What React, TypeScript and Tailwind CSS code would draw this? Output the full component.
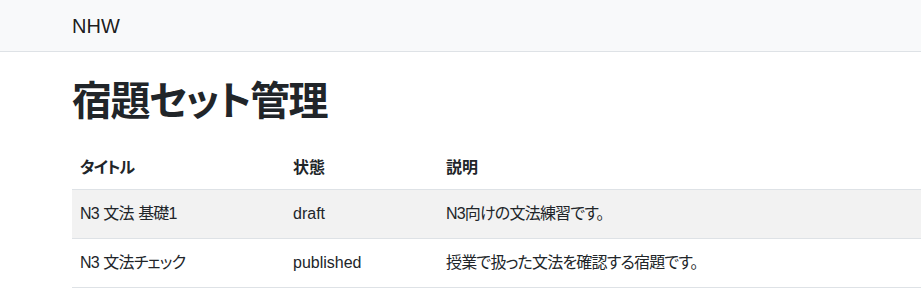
import React from 'react';

interface HomeworkSet {
  id: number;
  title: string;
  status: string;
  description: string;
}

const sets: HomeworkSet[] = [
  { id: 1, title: 'N3 文法 基礎1', status: 'draft', description: 'N3向けの文法練習です。' },
  { id: 2, title: 'N3 文法チェック', status: 'published', description: '授業で扱った文法を確認する宿題です。' },
];

const App: React.FC = () => {
  return (
    <div className="min-h-screen w-full overflow-hidden bg-white text-[#212529] font-['Liberation_Sans','Noto_Sans_CJK_JP',sans-serif] [font-feature-settings:'palt']">
      {/* Navbar */}
      <nav className="h-[52px] bg-[#f8f9fa] border-b border-[#dee2e6] flex items-center pl-[72px]">
        <span className="text-[20px] leading-none text-black/90">NHW</span>
      </nav>

      <main className="pl-[72px] pt-[25px]">
        <h1 className="text-[40px] leading-[48px] font-semibold tracking-[-1.5px]">宿題セット管理</h1>

        <table className="mt-[22px] w-[936px] table-fixed border-collapse text-[16px]">
          <colgroup>
            <col className="w-[213px]" />
            <col className="w-[153px]" />
            <col />
          </colgroup>
          <thead>
            <tr className="h-[42px] border-b border-[#dee2e6]">
              <th className="px-2 text-left font-bold tracking-[-1px]">タイトル</th>
              <th className="px-2 text-left font-bold">状態</th>
              <th className="px-2 text-left font-bold">説明</th>
            </tr>
          </thead>
          <tbody>
            {sets.map((s, i) => (
              <tr key={s.id} className={`h-[49px] border-b border-[#dee2e6] ${i % 2 === 0 ? 'bg-[#f2f2f2]' : 'bg-white'}`}>
                <td className="px-2 tracking-[-0.8px] [word-spacing:0.8px]">{s.title}</td>
                <td className="px-2">{s.status}</td>
                <td className="px-2 tracking-[-0.8px]">{s.description}</td>
              </tr>
            ))}
          </tbody>
        </table>
      </main>
    </div>
  );
};

export default App;
